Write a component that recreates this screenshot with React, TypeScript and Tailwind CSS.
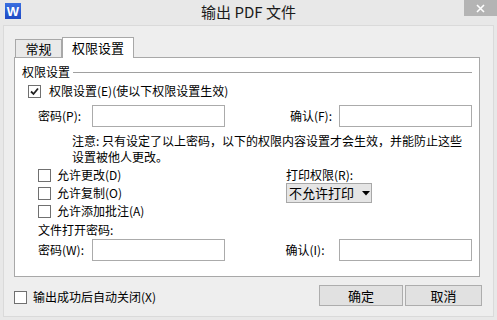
import React from "react";

const font = { fontFamily: '"Noto Sans CJK SC", "Liberation Sans", sans-serif' };

function Check({ checked = false }: { checked?: boolean }) {
  return (
    <div className="w-[13px] h-[13px] border border-[#707070] bg-white flex items-center justify-center shrink-0">
      {checked && (
        <svg width="9" height="9" viewBox="0 0 9 9">
          <path d="M1 4.5 L3.5 7 L8 1.5" stroke="#222" strokeWidth="1.8" fill="none" />
        </svg>
      )}
    </div>
  );
}

function Input({ w = 133 }: { w?: number }) {
  return <div className="h-[22px] border border-[#ababab] bg-white shrink-0" style={{ width: w }} />;
}

export default function App() {
  return (
    <div className="w-[497px] h-[320px] bg-[#e8e8e8] flex flex-col overflow-hidden text-[12px] leading-[14px] text-black" style={font}>
      {/* title bar */}
      <div className="h-[25px] relative flex items-start shrink-0">
        <div className="ml-[5px] mt-[3px] w-[16px] h-[16px] bg-gradient-to-b from-[#3a6fe0] to-[#1f49c4] flex items-center justify-center">
          <span className="text-white text-[13px] font-bold leading-[13px]" style={{ fontFamily: '"Liberation Sans", sans-serif' }}>W</span>
        </div>
        <div className="absolute left-0 right-0 top-[3px] text-center text-[15px] leading-[18px] text-[#1a1a1a]">输出 PDF 文件</div>
        <div className="absolute right-0 top-0 w-[33px] h-[16px] bg-[#b4b4b4] flex items-center justify-center">
          <svg width="9" height="9" viewBox="0 0 9 9">
            <path d="M1 1 L8 8 M8 1 L1 8" stroke="#fff" strokeWidth="1.6" />
          </svg>
        </div>
      </div>
      {/* body */}
      <div className="flex-1 mx-[3px] mb-[3px] border border-[#dadada] bg-[#eeeeee] flex flex-col pl-[10px] pr-[13px] pt-[11px]">
        {/* tabs */}
        <div className="flex items-end h-[20px] pl-[1px] relative z-10">
          <div className="w-[47px] h-[18px] border border-[#a8a8a8] border-b-0 bg-[#e9e9e9] flex items-center justify-center text-[13px]">常规</div>
          <div className="w-[72px] h-[21px] border border-[#a8a8a8] border-b-0 bg-white flex items-center justify-center text-[13px] -mb-[1px]">权限设置</div>
        </div>
        <div className="h-[220px] border border-[#a8a8a8] bg-white flex flex-col px-[7px]">
          {/* group label */}
          <div className="flex items-center h-[14px] mt-[7px]">
            <span>权限设置</span>
            <div className="flex-1 h-px bg-[#a0a0a0] ml-[3px]" />
          </div>
          <div className="flex items-center gap-[8px] mt-[5px] h-[14px] pl-[6px]">
            <Check checked />
            <span>权限设置(E)(使以下权限设置生效)</span>
          </div>
          <div className="flex items-center mt-[7px] h-[22px] pl-[16px]">
            <span className="w-[54px]">密码(P):</span>
            <Input />
            <span className="ml-auto mr-[7px]">确认(F):</span>
            <Input />
          </div>
          <div className="pl-[50px] mt-[6px] leading-[16px]">
            <div>注意: 只有设定了以上密码，以下的权限内容设置才会生效，并能防止这些</div>
            <div>设置被他人更改。</div>
          </div>
          <div className="flex mt-[3px]">
            <div className="flex flex-col pl-[16px] w-[264px]">
              <div className="flex items-center gap-[6px] h-[14px]">
                <Check />
                <span>允许更改(D)</span>
              </div>
              <div className="flex items-center gap-[6px] h-[14px] mt-[4px]">
                <Check />
                <span>允许复制(O)</span>
              </div>
              <div className="flex items-center gap-[6px] h-[14px] mt-[4px]">
                <Check />
                <span>允许添加批注(A)</span>
              </div>
            </div>
            <div className="flex flex-col">
              <span className="h-[14px]">打印权限(R):</span>
              <div className="mt-[1px] w-[86px] h-[20px] border border-[#a8a8a8] bg-[#e5e5e5] flex items-center pl-[2px] text-[13px]">
                <span>不允许打印</span>
                <svg className="ml-[8px]" width="8" height="5" viewBox="0 0 8 5">
                  <path d="M0 0 L8 0 L4 4.5 Z" fill="#000" />
                </svg>
              </div>
            </div>
          </div>
          <div className="pl-[16px] mt-[5px] h-[14px]">文件打开密码:</div>
          <div className="flex items-center mt-[2px] h-[22px] pl-[16px]">
            <span className="w-[54px]">密码(W):</span>
            <Input />
            <span className="ml-[61px] w-[54px]">确认(I):</span>
            <Input />
          </div>
        </div>
        {/* bottom */}
        <div className="flex items-start mt-[8px] -mr-[2px]">
          <div className="flex items-center gap-[6px] mt-[5px]">
            <Check />
            <span>输出成功后自动关闭(X)</span>
          </div>
          <div className="ml-auto flex gap-[2px]">
            <div className="w-[84px] h-[21px] border border-[#adadad] bg-[#e1e1e1] flex items-center justify-center text-[13px]">确定</div>
            <div className="w-[77px] h-[21px] border border-[#adadad] bg-[#e1e1e1] flex items-center justify-center text-[13px]">取消</div>
          </div>
        </div>
      </div>
    </div>
  );
}
